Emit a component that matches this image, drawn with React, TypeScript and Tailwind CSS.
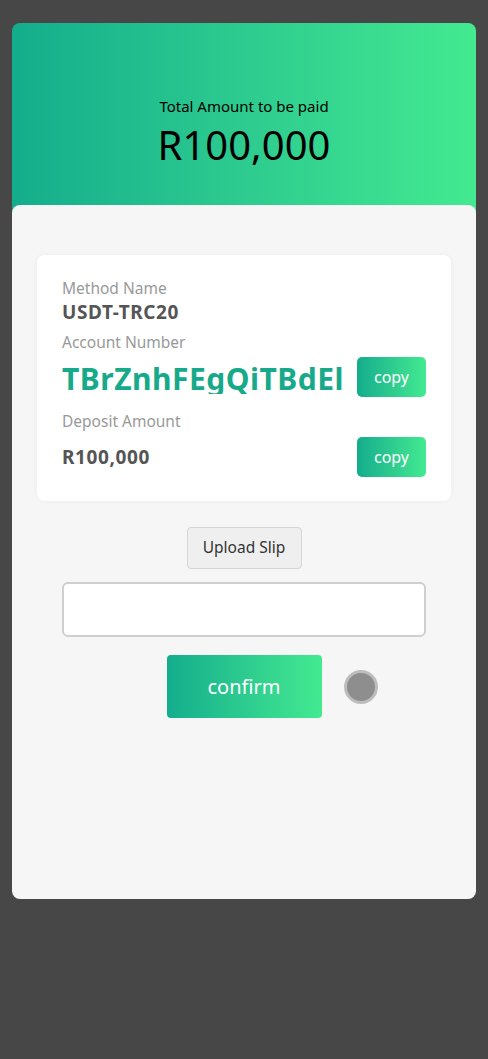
import { useState } from "react";

const font = { fontFamily: '"Noto Sans", "Open Sans", sans-serif' };

function CopyButton() {
  return (
    <button className="h-[40px] w-[69px] shrink-0 rounded-[5px] bg-gradient-to-r from-[#13ad8c] to-[#43ea90] text-[16px] text-white">
      copy
    </button>
  );
}

export default function App() {
  const [slip, setSlip] = useState("");

  return (
    <div className="min-h-[1059px] bg-[#474747] px-3 pt-[23px]" style={font}>
      <div className="overflow-hidden rounded-t-[8px] bg-gradient-to-r from-[#13ad8c] to-[#43ea90]">
        <div className="flex h-[190px] flex-col items-center pt-[73px] pb-[8px] text-black">
          <div className="text-[15px] leading-[20px]">Total Amount to be paid</div>
          <div className="mt-[4px] text-[40px] leading-[50px]">R100,000</div>
        </div>
      </div>
      <div className="relative -mt-[8px] h-[694px] rounded-[8px] bg-[#f6f6f6] px-[25px] pt-[50px]">
        <div className="rounded-[8px] bg-white px-[25px] pt-[22px] pb-[24px] shadow-[0_0_6px_rgba(0,0,0,0.04)]">
          <div className="text-[15.5px] leading-[22px] text-[#999]">Method Name</div>
          <div className="text-[19px] font-bold leading-[26px] tracking-[0.6px] text-[#555]">USDT-TRC20</div>
          <div className="mt-[6px] text-[15.5px] leading-[22px] text-[#999]">Account Number</div>
          <div className="mt-[4px] flex items-center justify-between">
            <div className="h-[33px] w-[284px] overflow-hidden whitespace-nowrap text-[30px] font-bold leading-[36px] tracking-[0.5px] text-[#16a98a]">
              TBrZnhFEgQiTBdEl
            </div>
            <CopyButton />
          </div>
          <div className="mt-[13px] text-[15.5px] leading-[22px] text-[#999]">Deposit Amount</div>
          <div className="mt-[5px] flex items-center justify-between">
            <div className="text-[19px] font-bold tracking-[0.6px] text-[#555]">R100,000</div>
            <CopyButton />
          </div>
        </div>

        <div className="mt-[26px] flex justify-center">
          <button className="h-[42px] w-[115px] rounded-[4px] border border-[#d6d6d6] bg-[#efefef] text-[15.5px] text-[#333]">
            Upload Slip
          </button>
        </div>
        <div className="mt-[13px] px-[25px]">
          <input
            value={slip}
            onChange={(e) => setSlip(e.target.value)}
            className="block h-[55px] w-full rounded-[6px] border-2 border-[#cfcfcf] bg-white px-3 outline-none"
          />
        </div>
        <div className="mt-[18px] flex items-center justify-center">
          <div className="w-[56px]" />
          <button className="h-[63px] w-[155px] rounded-[4px] bg-gradient-to-r from-[#13ad8c] to-[#43ea90] text-[20px] text-white">
            confirm
          </button>
          <div className="ml-[22px] h-[34px] w-[34px] rounded-full border-[3px] border-[#bdbdbd] bg-[#8e8e8e]" />
        </div>
      </div>
    </div>
  );
}
